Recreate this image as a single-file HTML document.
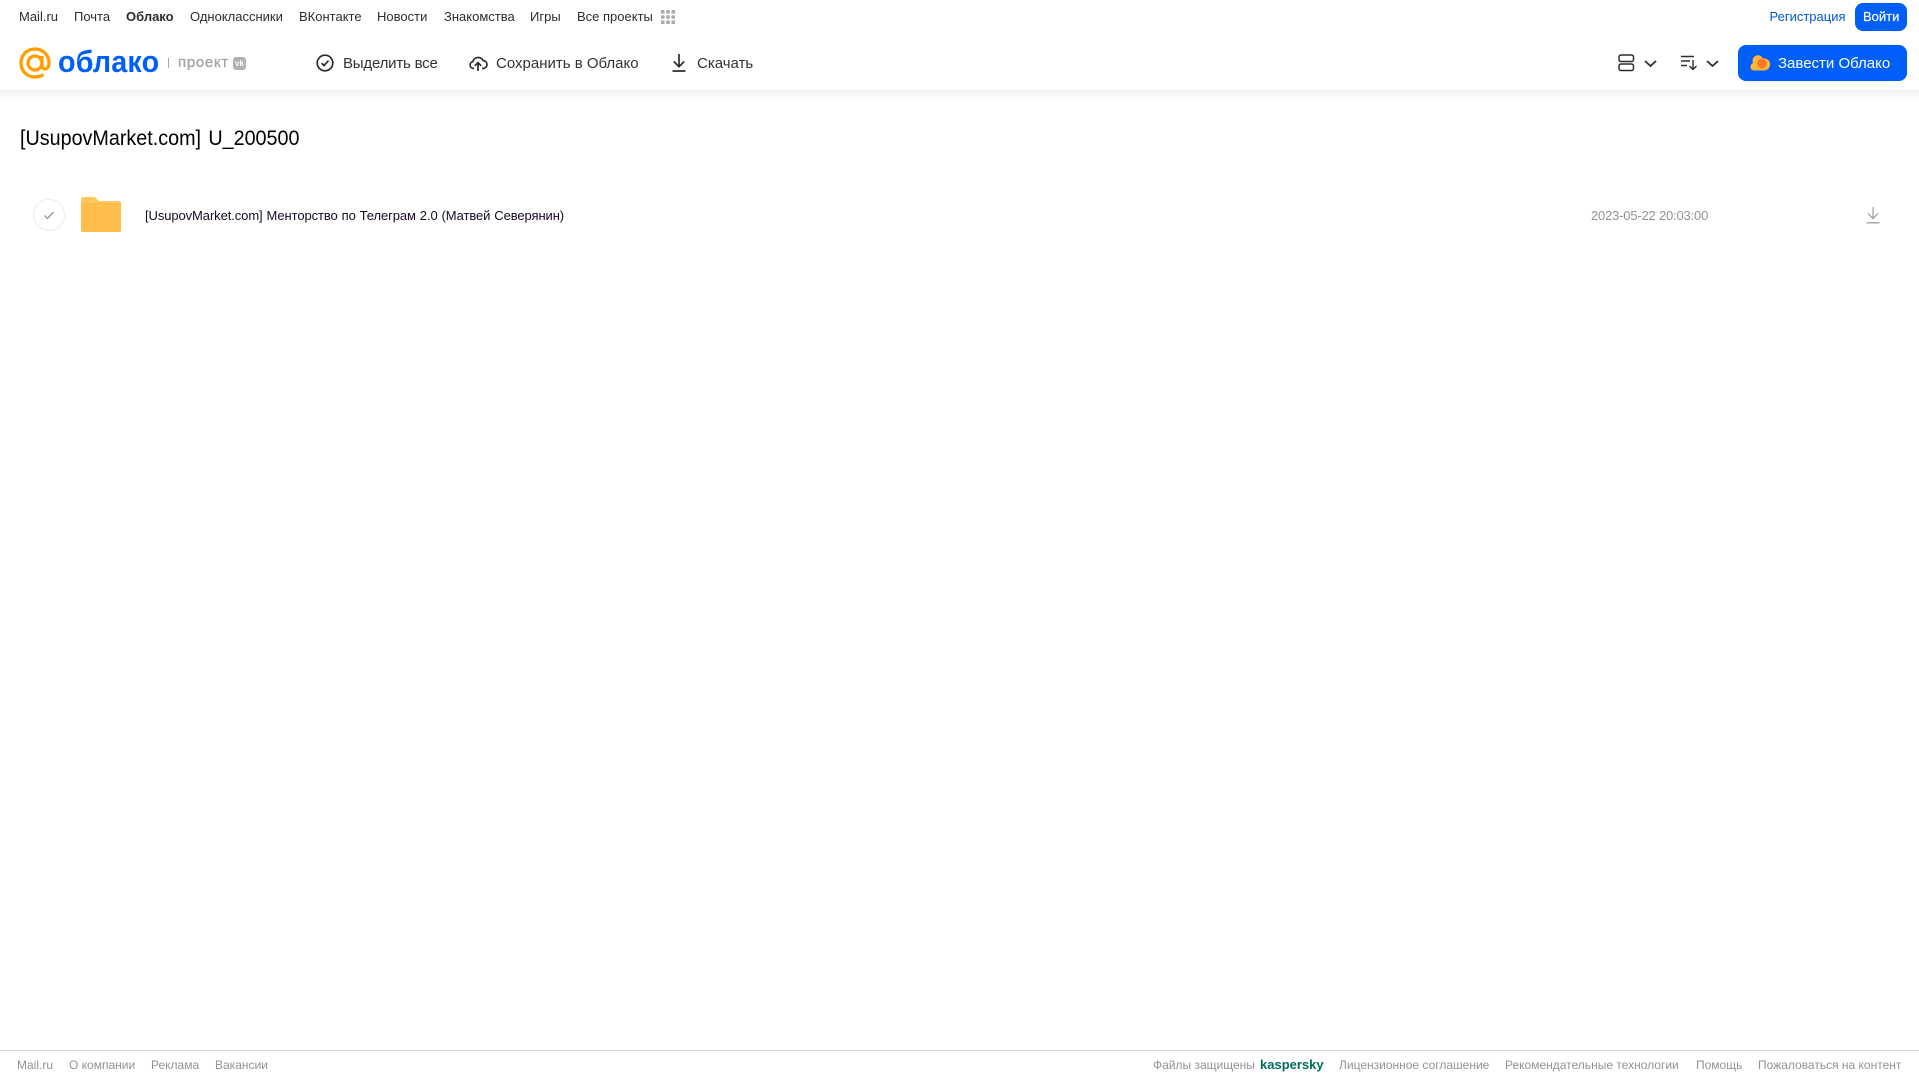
<!DOCTYPE html>
<html lang="ru"><head><meta charset="utf-8"><title>Облако</title>
<style>
html,body{margin:0;padding:0;background:#fff}
body{width:1919px;height:1079px;position:relative;overflow:hidden;font-family:"Liberation Sans",Arial,sans-serif}
a,span.t{position:absolute;white-space:nowrap;text-decoration:none;line-height:20px}
svg{position:absolute;overflow:visible}
.top{font-size:13px;color:#2c2d2e;top:7px}
.act{font-size:15px;color:#333;top:54px}
.ft{font-size:12px;color:#919399;top:1055px}
#shadow{position:absolute;left:0;top:90px;width:1919px;height:10px;background:linear-gradient(#f3f3f3,#fff)}
#line{position:absolute;left:0;top:1050px;width:1919px;height:1px;background:#d6d6d6}
.btn{position:absolute;background:#005ff9;border-radius:8px}
</style></head><body>
<a class="top" style="left:19px">Mail.ru</a>
<a class="top" style="left:74px">Почта</a>
<a class="top" style="left:126px;font-weight:bold">Облако</a>
<a class="top" style="left:190px">Одноклассники</a>
<a class="top" style="left:299px">ВКонтакте</a>
<a class="top" style="left:377px">Новости</a>
<a class="top" style="left:444px">Знакомства</a>
<a class="top" style="left:530px">Игры</a>
<a class="top" style="left:577px">Все проекты</a>
<svg style="left:661px;top:10px" width="14" height="14" fill="#a9a9a9"><rect x="0" y="0" width="3.6" height="3.6" rx="1"/><rect x="5.2" y="0" width="3.6" height="3.6" rx="1"/><rect x="10.4" y="0" width="3.6" height="3.6" rx="1"/><rect x="0" y="5.2" width="3.6" height="3.6" rx="1"/><rect x="5.2" y="5.2" width="3.6" height="3.6" rx="1"/><rect x="10.4" y="5.2" width="3.6" height="3.6" rx="1"/><rect x="0" y="10.4" width="3.6" height="3.6" rx="1"/><rect x="5.2" y="10.4" width="3.6" height="3.6" rx="1"/><rect x="10.4" y="10.4" width="3.6" height="3.6" rx="1"/></svg>
<a class="top" style="left:1769.500px;color:#005bd1">Регистрация</a>
<div class="btn" style="left:1855px;top:3px;width:52px;height:28px"></div>
<a class="top" style="left:1863px;color:#fff;-webkit-text-stroke:.2px #fff">Войти</a>

<svg style="left:19px;top:47px" width="32" height="32" fill="none" stroke="#ff9e00" stroke-width="3.300"><circle cx="16" cy="16" r="7"/><path d="M23 9v9.500c0 5 7 5 7-2.500C30 8 24 2 16 2S2 8 2 16s6 14 14 14c3.500 0 6-.8 8.500-2.300"/></svg>
<span class="t" style="left:58px;top:50px;font-size:31px;line-height:24px;font-weight:bold;color:#005ff9;letter-spacing:.2px;transform:scaleX(.925);transform-origin:0 50%">облако</span>
<div style="position:absolute;left:168px;top:58px;width:1px;height:10px;background:#a8a8a8"></div>
<span class="t" style="left:178px;top:53px;font-size:15px;color:#a0a2a5;letter-spacing:.7px;-webkit-text-stroke:.3px #a0a2a5">проект</span>
<div style="position:absolute;left:233px;top:57px;width:13px;height:13px;border-radius:3px;background:#b0b1b3;color:#fff;font:bold 8px/13px 'Liberation Sans',sans-serif;text-align:center">vk</div>

<svg style="left:316px;top:54px" width="18" height="18" fill="none" stroke="#2c2d2e" stroke-width="1.700"><circle cx="9" cy="9" r="7.800"/><path d="M5.600 9.200l2.400 2.300 4.500-4.800"/></svg>
<span class="t act" style="left:343px;letter-spacing:-.2px">Выделить все</span>
<svg style="left:469px;top:53.500px" width="18" height="18" fill="none" stroke="#2c2d2e" stroke-width="1.700"><path d="M5 14.500H4.500A3.500 3.500 0 0 1 3.800 7.600 5.500 5.500 0 0 1 14 6.500a4 4 0 0 1 .0 8h-1"/><path d="M9 17V9M5.800 11.800L9 8.600l3.200 3.200"/></svg>
<span class="t act" style="left:496px">Сохранить в Облако</span>
<svg style="left:671px;top:54px" width="16" height="18" fill="none" stroke="#2c2d2e" stroke-width="1.700"><path d="M8 0v12.500M2.800 7.500L8 12.700l5.200-5.200M1.500 17h13"/></svg>
<span class="t act" style="left:697px">Скачать</span>

<svg style="left:1618px;top:54px" width="17" height="18" fill="none" stroke="#2c2d2e" stroke-width="1.500"><rect x="1" y="1" width="14.500" height="6.500" rx="2"/><rect x="1" y="10" width="14.500" height="6.500" rx="2"/></svg>
<svg style="left:1643.500px;top:60px" width="13" height="8" fill="none" stroke="#2c2d2e" stroke-width="1.800"><path d="M1 1l5.500 5L12 1"/></svg>
<svg style="left:1681px;top:55px" width="17" height="16" fill="none" stroke="#2c2d2e" stroke-width="1.400"><path d="M0 1.500h13M0 6h9M0 10.500h6M12 5v9.500M8.500 11l3.500 3.500 3.500-3.500"/></svg>
<svg style="left:1705.500px;top:60px" width="13" height="8" fill="none" stroke="#2c2d2e" stroke-width="1.800"><path d="M1 1l5.500 5L12 1"/></svg>

<div class="btn" style="left:1738px;top:45px;width:169px;height:36px"></div>
<svg style="left:1750px;top:55px" width="20" height="16"><path fill="#ffb53c" d="M4 15.500a3.800 3.800 0 0 1-1-7.400A5.500 5.500 0 0 1 13 3.500 5.500 5.500 0 0 1 15 15.500z"/><circle cx="12" cy="8.500" r="4.800" fill="#ff7a1f"/></svg>
<span class="t" style="left:1778px;top:54px;font-size:15px;color:#fff">Завести Облако</span>

<div id="shadow"></div>

<span class="t" style="left:20px;top:126px;font-size:21px;line-height:26px;color:#000;word-spacing:2px;transform:scaleX(.94);transform-origin:0 50%">[UsupovMarket.com] U_200500</span>

<svg style="left:33px;top:199px" width="32" height="32" fill="none"><circle cx="16" cy="16" r="15.500" stroke="#ececec"/><path d="M11.500 16.500l3 3 6-6.500" stroke="#999" stroke-width="1.400"/></svg>
<svg style="left:81px;top:197px" width="40" height="35"><path fill="#ffc95f" d="M2 0h10c2 0 3 .8 4 2l2 2h20a2 2 0 0 1 2 2v4H0V2a2 2 0 0 1 2-2z"/><path fill="#ffbe4a" d="M0 6h38a2 2 0 0 1 2 2v25a2 2 0 0 1-2 2H2a2 2 0 0 1-2-2z"/></svg>
<span class="t" style="left:145px;top:206px;font-size:13px;color:#1a0a20;letter-spacing:-.09px;word-spacing:.4px">[UsupovMarket.com] Менторство по Телеграм 2.0 (Матвей Северянин)</span>
<span class="t" style="left:1591px;top:206px;font-size:13px;color:#919399;letter-spacing:-.19px">2023-05-22 20:03:00</span>
<svg style="left:1866px;top:207px" width="14" height="17" fill="none" stroke="#a3a4a6" stroke-width="1.300"><path d="M7 0v11M2 6.500L7 11.500l5-5M.5 15.800h13" /></svg>

<div id="line"></div>
<a class="ft" style="left:17px">Mail.ru</a>
<a class="ft" style="left:69px">О компании</a>
<a class="ft" style="left:151px">Реклама</a>
<a class="ft" style="left:215px">Вакансии</a>
<a class="ft" style="left:1153px">Файлы защищены</a>
<span class="t" style="left:1260px;top:1055px;font-size:13px;font-weight:bold;color:#006d5c">kaspersky</span>
<a class="ft" style="left:1339px">Лицензионное соглашение</a>
<a class="ft" style="left:1505px">Рекомендательные технологии</a>
<a class="ft" style="left:1696px">Помощь</a>
<a class="ft" style="left:1758px">Пожаловаться на контент</a>
</body></html>
